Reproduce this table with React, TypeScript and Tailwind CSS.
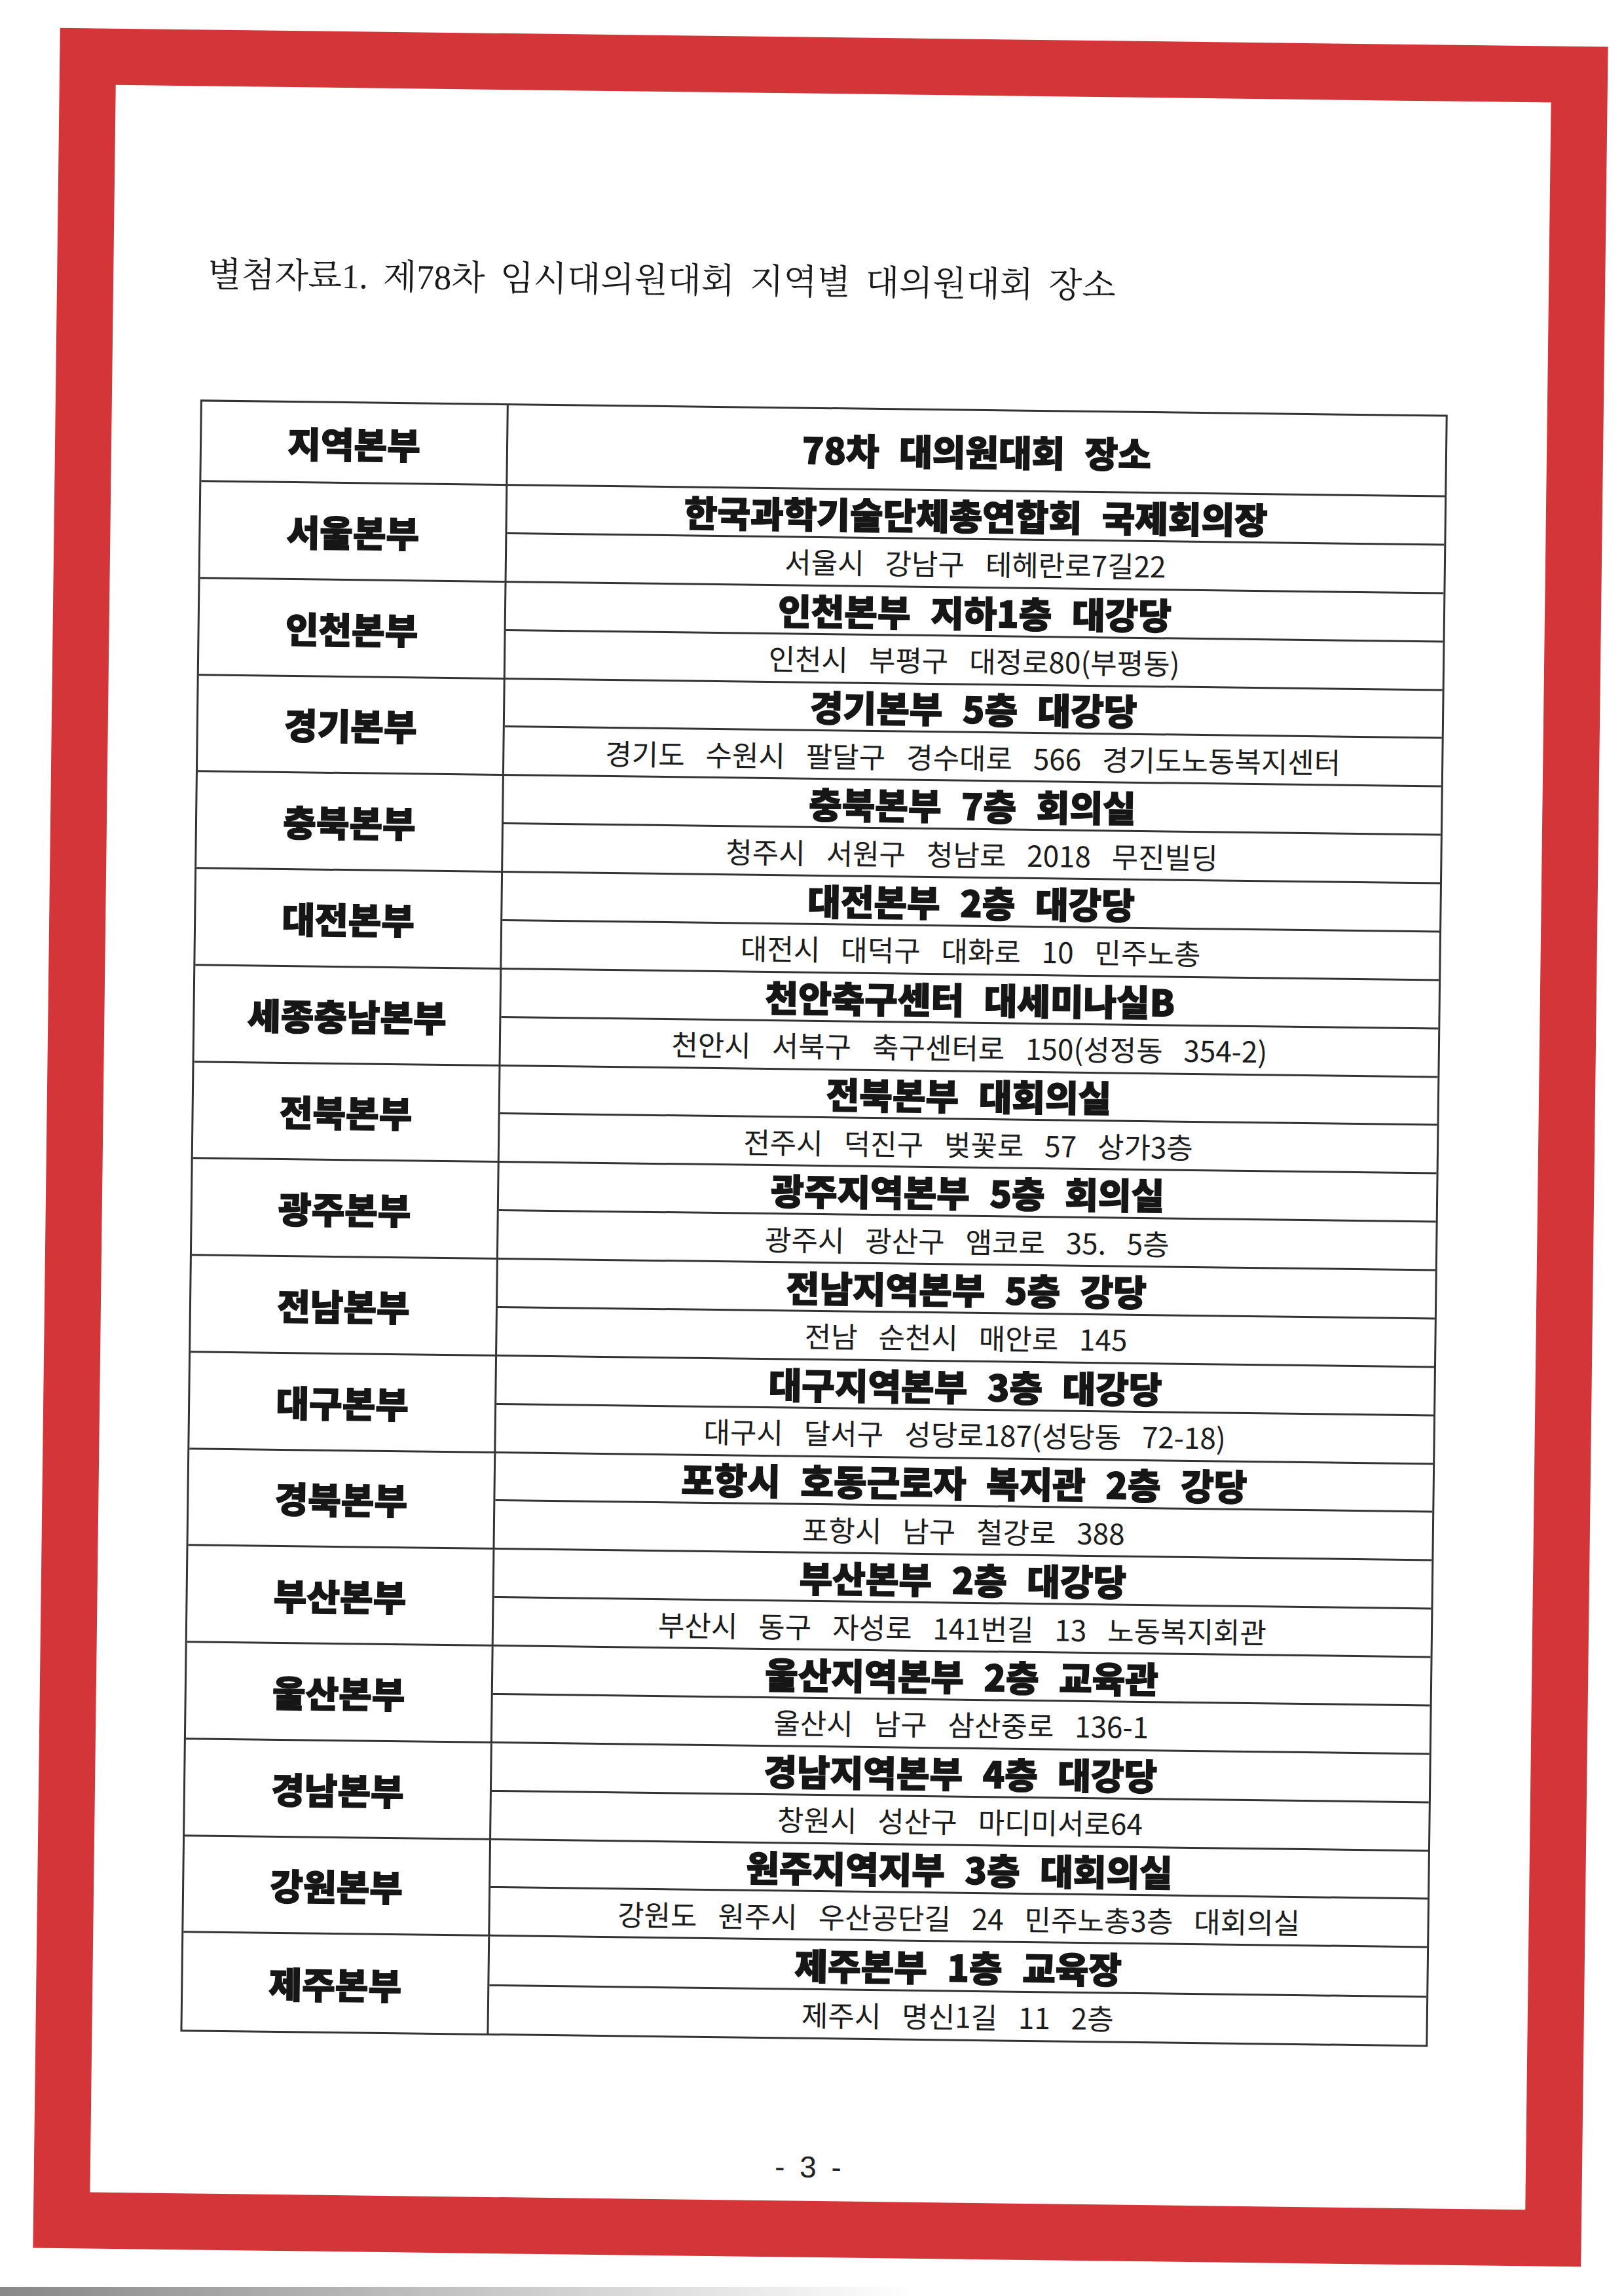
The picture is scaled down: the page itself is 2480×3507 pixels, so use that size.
import React from "react"

const rows: [string, string, string][] = [
  ["서울본부", "한국과학기술단체총연합회 국제회의장", "서울시 강남구 테헤란로7길22"],
  ["인천본부", "인천본부 지하1층 대강당", "인천시 부평구 대정로80(부평동)"],
  ["경기본부", "경기본부 5층 대강당", "경기도 수원시 팔달구 경수대로 566 경기도노동복지센터"],
  ["충북본부", "충북본부 7층 회의실", "청주시 서원구 청남로 2018 무진빌딩"],
  ["대전본부", "대전본부 2층 대강당", "대전시 대덕구 대화로 10 민주노총"],
  ["세종충남본부", "천안축구센터 대세미나실B", "천안시 서북구 축구센터로 150(성정동 354-2)"],
  ["전북본부", "전북본부 대회의실", "전주시 덕진구 벚꽃로 57 상가3층"],
  ["광주본부", "광주지역본부 5층 회의실", "광주시 광산구 앰코로 35. 5층"],
  ["전남본부", "전남지역본부 5층 강당", "전남 순천시 매안로 145"],
  ["대구본부", "대구지역본부 3층 대강당", "대구시 달서구 성당로187(성당동 72-18)"],
  ["경북본부", "포항시 호동근로자 복지관 2층 강당", "포항시 남구 철강로 388"],
  ["부산본부", "부산본부 2층 대강당", "부산시 동구 자성로 141번길 13 노동복지회관"],
  ["울산본부", "울산지역본부 2층 교육관", "울산시 남구 삼산중로 136-1"],
  ["경남본부", "경남지역본부 4층 대강당", "창원시 성산구 마디미서로64"],
  ["강원본부", "원주지역지부 3층 대회의실", "강원도 원주시 우산공단길 24 민주노총3층 대회의실"],
  ["제주본부", "제주본부 1층 교육장", "제주시 명신1길 11 2층"],
]

// heavy headline gothic, faked a bit blacker with a thin stroke
const heavy =
  "font-['Noto_Sans_CJK_KR',sans-serif] font-black text-[55px] leading-none text-[#161616] [-webkit-text-stroke:1.5px_#161616] [word-spacing:18px]"
const plain =
  "font-['Noto_Sans_CJK_KR',sans-serif] font-normal text-[44px] leading-none text-[#1c1c1c] [word-spacing:22px]"
const line = "border-[#333]"

export default function App() {
  return (
    <div className="relative h-[3507px] w-[2480px] overflow-hidden bg-white">
      <div className="pl-[71px] pt-[57px]">
        {/* red page frame, scanned slightly askew */}
        <div className="h-[3391px] w-[2364px] rotate-[0.7deg] bg-[#d33539] p-[86px]">
          <div className="flex h-full flex-col bg-white">
            <h1 className="pl-[144px] pt-[256px] font-['Liberation_Serif','Noto_Serif_CJK_KR','Noto_Sans_CJK_KR',serif] text-[53px] font-normal leading-[64px] text-[#1a1a1a] [word-spacing:10px]">
              별첨자료1. 제78차 임시대의원대회 지역별 대의원대회 장소
            </h1>

            {/* table */}
            <div className={`ml-[135px] mt-[159px] w-[1905px] border-[3px] ${line}`}>
              <div className={`flex h-[123px] border-b-[3px] ${line}`}>
                <div className={`flex w-[468px] shrink-0 items-center justify-center border-r-[3px] ${line} ${heavy}`}>
                  지역본부
                </div>
                <div className={`flex flex-1 items-center justify-center ${heavy}`}>78차 대의원대회 장소</div>
              </div>
              {rows.map(([region, place, addr], i) => (
                <div
                  key={region}
                  className={`flex h-[147.75px] ${i < rows.length - 1 ? `border-b-[3px] ${line}` : ""}`}
                >
                  <div className={`flex w-[468px] shrink-0 items-center justify-center border-r-[3px] ${line} ${heavy}`}>
                    {region}
                  </div>
                  <div className="flex flex-1 flex-col">
                    <div className={`flex flex-1 items-center justify-center border-b-[3px] ${line} ${heavy}`}>
                      {place}
                    </div>
                    <div className={`flex flex-1 items-center justify-center ${plain}`}>{addr}</div>
                  </div>
                </div>
              ))}
            </div>

            <p className="mt-[174px] text-center font-['Liberation_Sans',sans-serif] text-[46px] leading-[42px] text-[#222] [word-spacing:10px]">
              - 3 -
            </p>
          </div>
        </div>
      </div>
      {/* scanner edge shadow */}
      <div className="absolute bottom-0 left-0 h-[14px] w-[1400px] bg-gradient-to-r from-[#555] to-transparent opacity-70" />
    </div>
  )
}
